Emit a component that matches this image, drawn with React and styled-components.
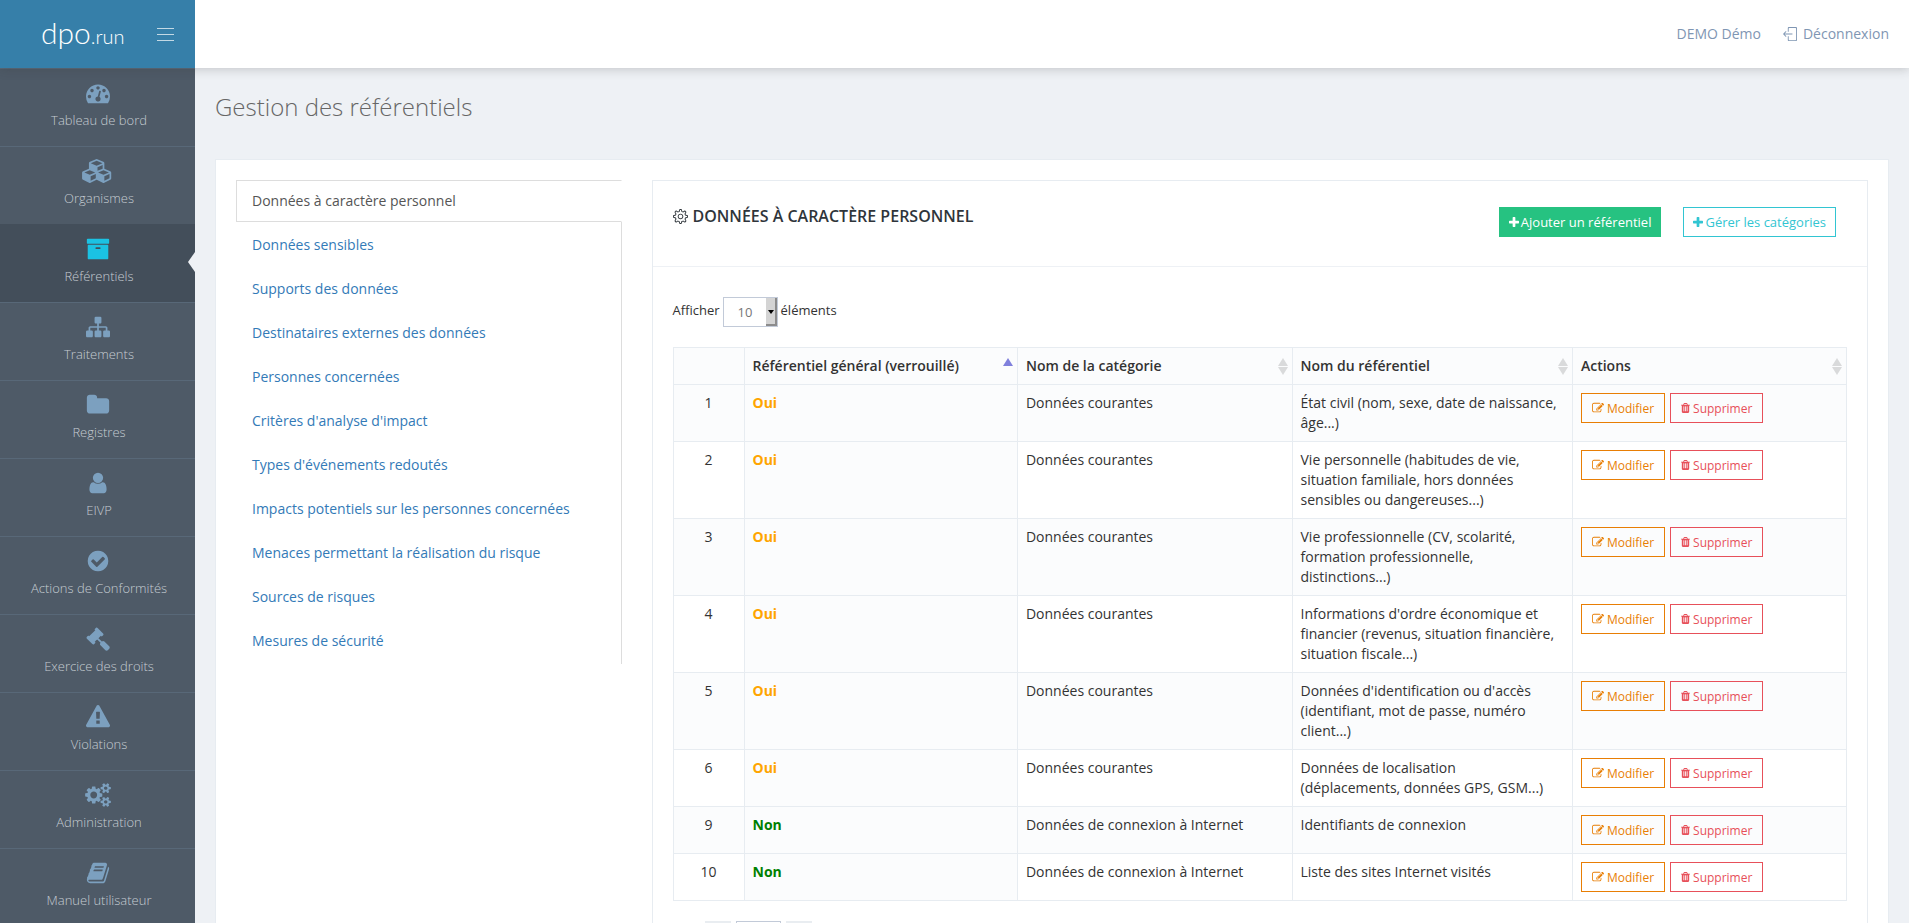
import React, { useState } from 'react'
import styled, { createGlobalStyle } from 'styled-components'
import { SlLogout, SlSettings } from 'react-icons/sl'

const icons = {
  dashboard: {
    width: 1792,
    d: 'M384 1152q0-53-37.5-90.5t-90.5-37.5-90.5 37.5-37.5 90.5 37.5 90.5 90.5 37.5 90.5-37.5 37.5-90.5zm192-448q0-53-37.5-90.5t-90.5-37.5-90.5 37.5-37.5 90.5 37.5 90.5 90.5 37.5 90.5-37.5 37.5-90.5zm428 481l101-382q6-26-7.5-48.5t-38.5-29.5-48 6.5-30 39.5l-101 382q-60 5-107 43.5t-63 98.5q-20 77 20 146t117 89 146-20 89-117q16-60-6-117t-72-91zm660-33q0-53-37.5-90.5t-90.5-37.5-90.5 37.5-37.5 90.5 37.5 90.5 90.5 37.5 90.5-37.5 37.5-90.5zm-640-640q0-53-37.5-90.5t-90.5-37.5-90.5 37.5-37.5 90.5 37.5 90.5 90.5 37.5 90.5-37.5 37.5-90.5zm448 192q0-53-37.5-90.5t-90.5-37.5-90.5 37.5-37.5 90.5 37.5 90.5 90.5 37.5 90.5-37.5 37.5-90.5zm320 448q0 261-141 483-19 29-54 29h-1402q-35 0-54-29-141-221-141-483 0-182 71-348t191-286 286-191 348-71 348 71 286 191 191 286 71 348z',
  },
  cubes: {
    width: 2304,
    d: 'M640 1632l384-192v-314l-384 164v342zm-64-454l404-173-404-173-404 173zm1088 454l384-192v-314l-384 164v342zm-64-454l404-173-404-173-404 173zm-448-293l384-165v-266l-384 164v267zm-64-379l441-189-441-189-441 189zm1088 518v416q0 36-19 67t-52 47l-448 224q-25 14-57 14t-57-14l-448-224q-4-2-7-4-2 2-7 4l-448 224q-25 14-57 14t-57-14l-448-224q-33-16-52-47t-19-67v-416q0-38 21.5-70t56.5-48l434-186v-400q0-38 21.5-70t56.5-48l448-192q23-10 50-10t50 10l448 192q35 16 56.5 48t21.5 70v400l434 186q36 16 57 48t21 70z',
  },
  archive: {
    width: 1792,
    d: 'M1088 832q0-26-19-45t-45-19h-256q-26 0-45 19t-19 45 19 45 45 19h256q26 0 45-19t19-45zm576-192v960q0 26-19 45t-45 19h-1408q-26 0-45-19t-19-45v-960q0-26 19-45t45-19h1408q26 0 45 19t19 45zm64-448v256q0 26-19 45t-45 19h-1536q-26 0-45-19t-19-45v-256q0-26 19-45t45-19h1536q26 0 45 19t19 45z',
  },
  sitemap: {
    width: 1792,
    d: 'M1792 1248v320q0 40-28 68t-68 28h-320q-40 0-68-28t-28-68v-320q0-40 28-68t68-28h96v-192h-512v192h96q40 0 68 28t28 68v320q0 40-28 68t-68 28h-320q-40 0-68-28t-28-68v-320q0-40 28-68t68-28h96v-192h-512v192h96q40 0 68 28t28 68v320q0 40-28 68t-68 28h-320q-40 0-68-28t-28-68v-320q0-40 28-68t68-28h96v-192q0-52 38-90t90-38h512v-192h-96q-40 0-68-28t-28-68v-320q0-40 28-68t68-28h320q40 0 68 28t28 68v320q0 40-28 68t-68 28h-96v192h512q52 0 90 38t38 90v192h96q40 0 68 28t28 68z',
  },
  folder: {
    width: 1792,
    d: 'M1728 608v704q0 92-66 158t-158 66h-1216q-92 0-158-66t-66-158v-960q0-92 66-158t158-66h320q92 0 158 66t66 158v32h672q92 0 158 66t66 158z',
  },
  user: {
    width: 1792,
    d: 'M1536 1399q0 109-62.5 187t-150.5 78h-854q-88 0-150.5-78t-62.5-187q0-85 8.5-160.5t31.5-152 58.5-131 94-89 134.5-34.5q131 128 313 128t313-128q76 0 134.5 34.5t94 89 58.5 131 31.5 152 8.5 160.5zm-256-887q0 159-112.5 271.5t-271.5 112.5-271.5-112.5-112.5-271.5 112.5-271.5 271.5-112.5 271.5 112.5 112.5 271.5z',
  },
  check: {
    width: 1792,
    d: 'M1412 734q0-28-18-46l-91-90q-19-19-45-19t-45 19l-408 407-226-226q-19-19-45-19t-45 19l-91 90q-18 18-18 46 0 27 18 45l362 362q19 19 45 19 27 0 46-19l543-543q18-18 18-45zm252 162q0 209-103 385.5t-279.5 279.5-385.5 103-385.5-103-279.5-279.5-103-385.5 103-385.5 279.5-279.5 385.5-103 385.5 103 279.5 279.5 103 385.5z',
  },
  gavel: {
    width: 1792,
    d: 'M1771 1536q0 53-37 90l-107 108q-39 37-91 37-53 0-90-37l-363-364q-38-36-38-90 0-53 43-96l-256-256-126 126q-14 14-34 14t-34-14q2 2 12.5 12t12.5 13 10 11.5 10 13.5 6 13.5 5.5 16.5 1.5 18q0 38-28 68-3 3-16.5 18t-19 20.5-18.5 16.5-22 15.5-22 9-26 4.5q-40 0-68-28l-408-408q-28-28-28-68 0-13 4.5-26t9-22 15.5-22 16.5-18.5 20.5-19 18-16.5q30-28 68-28 10 0 18 1.5t16.5 5.5 13.5 6 13.5 10 11.5 10 13 12.5 12 12.5q-14-14-14-34t14-34l348-348q14-14 34-14t34 14q-2-2-12.5-12t-12.5-13-10-11.5-10-13.5-6-13.5-5.5-16.5-1.5-18q0-38 28-68 3-3 16.5-18t19-20.5 18.5-16.5 22-15.5 22-9 26-4.5q40 0 68 28l408 408q28 28 28 68 0 13-4.5 26t-9 22-15.5 22-16.5 18.5-20.5 19-18 16.5q-30 28-68 28-10 0-18-1.5t-16.5-5.5-13.5-6-13.5-10-11.5-10-13-12.5-12-12.5q14 14 14 34t-14 34l-126 126 256 256q43-43 96-43 52 0 91 37l363 363q37 39 37 91z',
  },
  warning: {
    width: 1792,
    d: 'M1024 1375v-190q0-14-9.5-23.5t-22.5-9.5h-192q-13 0-22.5 9.5t-9.5 23.5v190q0 14 9.5 23.5t22.5 9.5h192q13 0 22.5-9.5t9.5-23.5zm-2-374l18-459q0-12-10-19-13-11-24-11h-220q-11 0-24 11-10 7-10 21l17 457q0 10 10 16.5t24 6.5h185q14 0 23.5-6.5t10.5-16.5zm-14-934l768 1408q35 63-2 126-17 29-46.5 46t-63.5 17h-1536q-34 0-63.5-17t-46.5-46q-37-63-2-126l768-1408q17-31 47-49t65-18 65 18 47 49z',
  },
  cogs: {
    width: 1920,
    d: 'M896 896q0-106-75-181t-181-75-181 75-75 181 75 181 181 75 181-75 75-181zm768 512q0-52-38-90t-90-38-90 38-38 90q0 53 37.5 90.5t90.5 37.5 90.5-37.5 37.5-90.5zm0-1024q0-52-38-90t-90-38-90 38-38 90q0 53 37.5 90.5t90.5 37.5 90.5-37.5 37.5-90.5zm-384 421v185q0 10-7 19.5t-16 10.5l-155 24q-11 35-32 76 34 48 90 115 7 11 7 20 0 12-7 19-23 30-82.5 89.5t-78.5 59.5q-11 0-21-7l-115-90q-37 19-77 31-11 108-23 155-7 24-30 24h-186q-11 0-20-7.5t-10-17.5l-23-153q-34-10-75-31l-118 89q-7 7-20 7-11 0-21-8-144-133-144-160 0-9 7-19 10-14 41-53t47-61q-23-44-35-82l-152-24q-10-1-17-9.5t-7-19.5v-185q0-10 7-19.5t16-10.5l155-24q11-35 32-76-34-48-90-115-7-11-7-20 0-12 7-20 22-30 82-89t79-59q11 0 21 7l115 90q34-18 77-32 11-108 23-154 7-24 30-24h186q11 0 20 7.5t10 17.5l23 153q34 10 75 31l118-89q8-7 20-7 11 0 21 8 144 133 144 160 0 8-7 19-12 16-42 54t-45 60q23 48 34 82l152 23q10 2 17 10.5t7 19.5zm640 533v140q0 16-149 31-12 27-30 52 51 113 51 138 0 4-4 7-122 71-124 71-8 0-46-47t-52-68q-20 2-30 2t-30-2q-14 21-52 68t-46 47q-2 0-124-71-4-3-4-7 0-25 51-138-18-25-30-52-149-15-149-31v-140q0-16 149-31 13-29 30-52-51-113-51-138 0-4 4-7 4-2 35-20t59-34 30-16q8 0 46 46.5t52 67.5q20-2 30-2t30 2q51-71 92-112l6-2q4 0 124 70 4 3 4 7 0 25-51 138 17 23 30 52 149 15 149 31zm0-1024v140q0 16-149 31-12 27-30 52 51 113 51 138 0 4-4 7-122 71-124 71-8 0-46-47t-52-68q-20 2-30 2t-30-2q-14 21-52 68t-46 47q-2 0-124-71-4-3-4-7 0-25 51-138-18-25-30-52-149-15-149-31v-140q0-16 149-31 13-29 30-52-51-113-51-138 0-4 4-7 4-2 35-20t59-34 30-16q8 0 46 46.5t52 67.5q20-2 30-2t30 2q51-71 92-112l6-2q4 0 124 70 4 3 4 7 0 25-51 138 17 23 30 52 149 15 149 31z',
  },
  book: {
    width: 1792,
    d: 'M1703 478q40 57 18 129l-275 906q-19 64-76.5 107.5t-122.5 43.5h-923q-77 0-148.5-53.5t-99.5-131.5q-24-67-2-127 0-4 3-27t4-37q1-8-3-21.5t-3-19.5q2-11 8-21t16.5-23.5 16.5-23.5q23-38 45-91.5t30-91.5q3-10 .5-30t-.5-28q3-11 17-28t17-23q21-36 42-92t25-90q1-9-2.5-32t.5-28q4-13 22-30.5t22-22.5q19-26 42.5-84.5t27.5-96.5q1-8-3-25.5t-2-26.5q2-8 9-18t18-23 17-21q8-12 16.5-30.5t15-35 16-36 19.5-32 26.5-23.5 36-11.5 47.5 5.5l-1 3q38-9 51-9h761q74 0 114 56t18 130l-274 906q-36 119-71.5 153.5t-128.5 34.5h-869q-27 0-38 15-11 16-1 43 24 70 144 70h923q29 0 56-15.5t35-41.5l300-987q7-22 5-57 38 15 59 43zm-1064 2q-4 13 2 22.5t20 9.5h608q13 0 25.5-9.5t16.5-22.5l21-64q4-13-2-22.5t-20-9.5h-608q-13 0-25.5 9.5t-16.5 22.5zm-83 256q-4 13 2 22.5t20 9.5h608q13 0 25.5-9.5t16.5-22.5l21-64q4-13-2-22.5t-20-9.5h-608q-13 0-25.5 9.5t-16.5 22.5z',
  },
  plus: {
    left: 192,
    width: 1408,
    d: 'M1600 736v192q0 40-28 68t-68 28h-416v416q0 40-28 68t-68 28h-192q-40 0-68-28t-28-68v-416h-416q-40 0-68-28t-28-68v-192q0-40 28-68t68-28h416v-416q0-40 28-68t68-28h192q40 0 68 28t28 68v416h416q40 0 68 28t28 68z',
  },
  edit: {
    width: 1792,
    d: 'M888 1184l116-116-152-152-116 116v56h96v96h56zm440-720q-16-16-33 1l-350 350q-17 17-1 33t33-1l350-350q17-17 1-33zm80 594v190q0 119-84.5 203.5t-203.5 84.5h-832q-119 0-203.5-84.5t-84.5-203.5v-832q0-119 84.5-203.5t203.5-84.5h832q63 0 117 25 15 7 18 23 3 17-9 29l-49 49q-14 14-32 8-23-6-45-6h-832q-66 0-113 47t-47 113v832q0 66 47 113t113 47h832q66 0 113-47t47-113v-126q0-13 9-22l64-64q15-15 35-7t20 29zm-96-738l288 288-672 672h-288v-288zm444 132l-92 92-288-288 92-92q28-28 68-28t68 28l152 152q28 28 28 68t-28 68z',
  },
  trash: {
    left: 192,
    width: 1408,
    d: 'M704 1376v-704q0-14-9-23t-23-9h-64q-14 0-23 9t-9 23v704q0 14 9 23t23 9h64q14 0 23-9t9-23zm256 0v-704q0-14-9-23t-23-9h-64q-14 0-23 9t-9 23v704q0 14 9 23t23 9h64q14 0 23-9t9-23zm256 0v-704q0-14-9-23t-23-9h-64q-14 0-23 9t-9 23v704q0 14 9 23t23 9h64q14 0 23-9t9-23zm-544-992h448l-48-117q-7-9-17-11h-317q-10 2-17 11zm928 32v64q0 14-9 23t-23 9h-96v948q0 83-47 143.5t-113 60.5h-832q-66 0-113-58.5t-47-141.5v-952h-96q-14 0-23-9t-9-23v-64q0-14 9-23t23-9h309l70-167q15-37 54-63t79-26h320q40 0 79 26t54 63l70 167h309q14 0 23 9t9 23z',
  },
}

const menu = [
  { label: 'Tableau de bord', icon: 'dashboard' },
  { label: 'Organismes', icon: 'cubes' },
  { label: 'Référentiels', icon: 'archive', active: true },
  { label: 'Traitements', icon: 'sitemap' },
  { label: 'Registres', icon: 'folder' },
  { label: 'EIVP', icon: 'user' },
  { label: 'Actions de Conformités', icon: 'check' },
  { label: 'Exercice des droits', icon: 'gavel' },
  { label: 'Violations', icon: 'warning' },
  { label: 'Administration', icon: 'cogs' },
  { label: 'Manuel utilisateur', icon: 'book' },
]

const tabs = [
  'Données à caractère personnel',
  'Données sensibles',
  'Supports des données',
  'Destinataires externes des données',
  'Personnes concernées',
  "Critères d'analyse d'impact",
  "Types d'événements redoutés",
  'Impacts potentiels sur les personnes concernées',
  'Menaces permettant la réalisation du risque',
  'Sources de risques',
  'Mesures de sécurité',
]

const rows = [
  { id: 1, locked: true, category: 'Données courantes', name: 'État civil (nom, sexe, date de naissance, âge...)' },
  { id: 2, locked: true, category: 'Données courantes', name: 'Vie personnelle (habitudes de vie, situation familiale, hors données sensibles ou dangereuses...)' },
  { id: 3, locked: true, category: 'Données courantes', name: 'Vie professionnelle (CV, scolarité, formation professionnelle, distinctions...)' },
  { id: 4, locked: true, category: 'Données courantes', name: "Informations d'ordre économique et financier (revenus, situation financière, situation fiscale...)" },
  { id: 5, locked: true, category: 'Données courantes', name: "Données d'identification ou d'accès (identifiant, mot de passe, numéro client...)" },
  { id: 6, locked: true, category: 'Données courantes', name: 'Données de localisation\n(déplacements, données GPS, GSM...)' },
  { id: 9, locked: false, category: 'Données de connexion à Internet', name: 'Identifiants de connexion' },
  { id: 10, locked: false, category: 'Données de connexion à Internet', name: 'Liste des sites Internet visités' },
]

const Icon = ({ name, size }) => {
  const { left = 0, width, d } = icons[name]
  return (
    <svg
      width={Math.round((size * width) / 1792)}
      height={size}
      viewBox={`${left} 0 ${width} 1792`}
      fill='currentColor'
      aria-hidden='true'
    >
      <path d={d} />
    </svg>
  )
}

const SortIcon = ({ sorted }) => (
  <svg width='10' height='17' viewBox='0 0 10 17' aria-hidden='true'>
    <path d='M5 0 10 8H0z' fill={sorted ? '#8080dc' : '#d9dadb'} />
    {!sorted && <path d='M0 9h10l-5 8z' fill='#d9dadb' />}
  </svg>
)

const columns = ['Référentiel général (verrouillé)', 'Nom de la catégorie', 'Nom du référentiel', 'Actions']

const App = () => {
  const [activeTab, setActiveTab] = useState(0)
  const [length, setLength] = useState('10')
  const [page, setPage] = useState('1')

  return (
    <>
      <GlobalStyle />
      <Page>
        <Header>
          <Brand>
            <Logo href='#accueil'>
              dpo<small>.run</small>
            </Logo>
            <Toggler type='button' aria-label='Menu'>
              <span />
              <span />
              <span />
            </Toggler>
          </Brand>
          <TopMenu>
            <a href='#profil'>DEMO Démo</a>
            <a href='#deconnexion'>
              <SlLogout size={14} />
              Déconnexion
            </a>
          </TopMenu>
        </Header>
        <Body>
          <Sidebar>
            {menu.map(({ label, icon, active }) => (
              <MenuLink key={label} href={`#${icon}`} $active={active}>
                <Icon name={icon} size={24} />
                <span>{label}</span>
              </MenuLink>
            ))}
          </Sidebar>
          <Main>
            <Title>Gestion des référentiels</Title>
            <Panel>
              <TabColumn>
                <TabList>
                  {tabs.map((tab, index) => (
                    <Tab
                      key={tab}
                      href={`#tab-${index}`}
                      $active={index === activeTab}
                      onClick={() => setActiveTab(index)}
                    >
                      {tab}
                    </Tab>
                  ))}
                </TabList>
              </TabColumn>
              <PortletColumn>
                <Portlet>
                  <PortletHeader>
                    <h2>
                      <SlSettings size={15} />
                      {tabs[activeTab]}
                    </h2>
                    <HeaderActions>
                      <Button type='button' $color='#26c281' $filled>
                        <Icon name='plus' size={13} />
                        Ajouter un référentiel
                      </Button>
                      <Button type='button' $color='#32c5d2'>
                        <Icon name='plus' size={13} />
                        Gérer les catégories
                      </Button>
                    </HeaderActions>
                  </PortletHeader>
                  <LengthRow>
                    <label htmlFor='length'>Afficher</label>
                    <SelectBox>
                      <select id='length' value={length} onChange={(e) => setLength(e.target.value)}>
                        <option>10</option>
                        <option>25</option>
                        <option>50</option>
                      </select>
                      <i />
                    </SelectBox>
                    <span>éléments</span>
                  </LengthRow>
                  <Table>
                    <colgroup>
                      <col width='71' />
                      <col width='23.3%' />
                      <col width='23.4%' />
                      <col width='23.9%' />
                      <col />
                    </colgroup>
                    <thead>
                      <tr>
                        <th aria-label='Numéro' />
                        {columns.map((column, index) => (
                          <th key={column}>
                            <HeadCell>
                              {column}
                              <SortIcon sorted={index === 0} />
                            </HeadCell>
                          </th>
                        ))}
                      </tr>
                    </thead>
                    <tbody>
                      {rows.map(({ id, locked, category, name }) => (
                        <tr key={id}>
                          <td>{id}</td>
                          <td>
                            <Status $locked={locked}>{locked ? 'Oui' : 'Non'}</Status>
                          </td>
                          <td>{category}</td>
                          <td>{name}</td>
                          <td>
                            <RowActions>
                              <Button type='button' $color='#e87e04' $small>
                                <Icon name='edit' size={12} />
                                Modifier
                              </Button>
                              <Button type='button' $color='#e7505a' $small>
                                <Icon name='trash' size={12} />
                                Supprimer
                              </Button>
                            </RowActions>
                          </td>
                        </tr>
                      ))}
                    </tbody>
                  </Table>
                  <Pager>
                    <button type='button' aria-label='Page précédente'>‹</button>
                    <input aria-label='Page' value={page} onChange={(e) => setPage(e.target.value)} />
                    <button type='button' aria-label='Page suivante'>›</button>
                  </Pager>
                </Portlet>
              </PortletColumn>
            </Panel>
          </Main>
        </Body>
      </Page>
    </>
  )
}

const GlobalStyle = createGlobalStyle`
  * {
    box-sizing: border-box;
  }
  html {
    scrollbar-width: none;
  }
  body {
    margin: 0;
    background: #eef1f5;
    color: #333;
    font-family: 'Open Sans', sans-serif;
    font-size: 14px;
    line-height: 20px;
  }
  a {
    text-decoration: none;
  }
  button, input, select {
    font-family: inherit;
  }
`

const Page = styled.div`
  min-height: 100vh;
  display: flex;
  flex-direction: column;
`

const Header = styled.header`
  position: sticky;
  top: 0;
  z-index: 2;
  display: flex;
  height: 68px;
  background: #fff;
  box-shadow: 0 1px 10px rgba(50, 50, 50, 0.25);
`

const Brand = styled.div`
  width: 195px;
  padding: 0 21px 0 41px;
  display: flex;
  align-items: center;
  justify-content: space-between;
  background: #367fa9;
`

const Logo = styled.a`
  color: #fff;
  font-family: Lato, sans-serif;
  font-size: 30px;
  font-weight: 300;
  line-height: 36px;
  small {
    font-size: 20px;
  }
`

const Toggler = styled.button`
  width: 17px;
  padding: 0;
  border: none;
  background: none;
  display: flex;
  flex-direction: column;
  gap: 5px;
  cursor: pointer;
  span {
    height: 1px;
    background: #c3d9e5;
  }
`

const TopMenu = styled.nav`
  flex: 1;
  padding: 0 20px;
  display: flex;
  align-items: center;
  justify-content: flex-end;
  gap: 22px;
  a {
    display: flex;
    align-items: center;
    gap: 6px;
    color: #7f96b3;
  }
`

const Body = styled.div`
  flex: 1;
  display: flex;
`

const Sidebar = styled.nav`
  width: 195px;
  flex-shrink: 0;
  background: #4e5a67;
`

const MenuLink = styled.a`
  position: relative;
  display: flex;
  flex-direction: column;
  align-items: center;
  gap: 5px;
  height: 78px;
  padding-top: 12px;
  border-top: 1px solid ${({ $active }) => ($active ? '#434e5a' : '#586878')};
  background: ${({ $active }) => ($active ? '#434e5a' : 'transparent')};
  color: #c5ccd2;
  font-size: 13px;
  font-weight: 300;
  span {
    padding-left: 3px;
  }
  svg {
    color: ${({ $active }) => ($active ? '#1bc2e3' : '#7ca0bf')};
  }
  &::after {
    content: '';
    display: ${({ $active }) => ($active ? 'block' : 'none')};
    position: absolute;
    right: 0;
    top: 27px;
    border: 10px solid transparent;
    border-left: none;
    border-right: 7px solid #eef1f5;
  }
`

const Main = styled.main`
  flex: 1;
  min-width: 0;
  padding: 20px;
`

const Title = styled.h1`
  margin: 0 0 33px;
  color: #666;
  font-size: 24px;
  font-weight: 300;
  line-height: 38px;
`

const Panel = styled.section`
  display: flex;
  padding: 20px 5px;
  border: 1px solid #e7ecf1;
  background: #fff;
`

const TabColumn = styled.div`
  width: 25%;
  padding: 0 15px;
`

const PortletColumn = styled.div`
  width: 75%;
  padding: 0 15px;
`

const TabList = styled.nav`
  display: flex;
  flex-direction: column;
  gap: 2px;
  padding-bottom: 2px;
  border-right: 1px solid #ddd;
`

const Tab = styled.a`
  margin-right: -1px;
  padding: 10px 15px;
  border: 1px solid ${({ $active }) => ($active ? '#ddd' : 'transparent')};
  border-right-color: ${({ $active }) => ($active ? '#fff' : 'transparent')};
  color: ${({ $active }) => ($active ? '#555' : '#337ab7')};
`

const Portlet = styled.section`
  padding: 0 20px 20px;
  border: 1px solid #e7ecf1;
`

const PortletHeader = styled.header`
  display: flex;
  justify-content: space-between;
  align-items: flex-start;
  height: 86px;
  margin: 0 -20px 30px;
  padding: 26px 31px 0 20px;
  border-bottom: 1px solid #eef1f5;
  h2 {
    display: flex;
    align-items: center;
    gap: 5px;
    margin: 0;
    font-size: 16px;
    font-weight: 600;
    line-height: 18px;
    text-transform: uppercase;
    color: #2f353b;
  }
`

const HeaderActions = styled.div`
  display: flex;
  gap: 22px;
`

const Button = styled.button`
  display: inline-flex;
  align-items: center;
  gap: ${({ $small }) => ($small ? '3px' : '2px')};
  height: 30px;
  padding: 0 ${({ $small }) => ($small ? '10px' : '9px')};
  border: 1px solid ${({ $color }) => $color};
  background: ${({ $color, $filled }) => ($filled ? $color : 'transparent')};
  color: ${({ $color, $filled }) => ($filled ? '#fff' : $color)};
  font-size: ${({ $small }) => ($small ? '12px' : '13px')};
  white-space: nowrap;
  cursor: pointer;
`

const LengthRow = styled.div`
  display: flex;
  align-items: flex-start;
  gap: 3px;
  margin-bottom: 20px;
  font-size: 13px;
  line-height: 26px;
`

const SelectBox = styled.div`
  position: relative;
  height: 30px;
  select {
    appearance: none;
    display: block;
    width: 55px;
    height: 30px;
    padding: 0 14px;
    border: 1px solid #c2cad8;
    border-radius: 0;
    background: #fff;
    color: #777;
    font-size: 13px;
  }
  i {
    position: absolute;
    top: 1px;
    right: 1px;
    width: 11px;
    height: 28px;
    background: #d4d4d4;
    border: solid #8c8c8c;
    border-width: 0 2px 2px 0;
    pointer-events: none;
  }
  i::after {
    content: '';
    position: absolute;
    top: 12px;
    left: 2px;
    border: 3px solid transparent;
    border-top: 4px solid #000;
    border-bottom: none;
  }
`

const Table = styled.table`
  width: 100%;
  border-collapse: collapse;
  table-layout: fixed;
  th,
  td {
    padding: 8px;
    border: 1px solid #e7ecf1;
    text-align: left;
    vertical-align: top;
    white-space: pre-line;
  }
  th {
    padding-right: 4px;
    background: #fbfcfd;
    font-weight: 600;
  }
  td:first-child {
    text-align: center;
  }
  td:nth-child(2),
  tbody tr:nth-child(odd) {
    background: #fbfcfd;
  }
`

const HeadCell = styled.div`
  display: flex;
  align-items: center;
  justify-content: space-between;
`

const Status = styled.span`
  color: ${({ $locked }) => ($locked ? 'orange' : 'green')};
  font-weight: 700;
`

const RowActions = styled.div`
  display: flex;
  gap: 5px;
`

const Pager = styled.div`
  display: flex;
  gap: 5px;
  margin-top: 20px;
  padding-left: 32px;
  button {
    width: 26px;
    height: 30px;
    border: none;
    background: #e9edf1;
    color: #666;
  }
  input {
    width: 45px;
    height: 30px;
    border: 1px solid #c2cad8;
    text-align: center;
    color: #555;
  }
`

export default App
